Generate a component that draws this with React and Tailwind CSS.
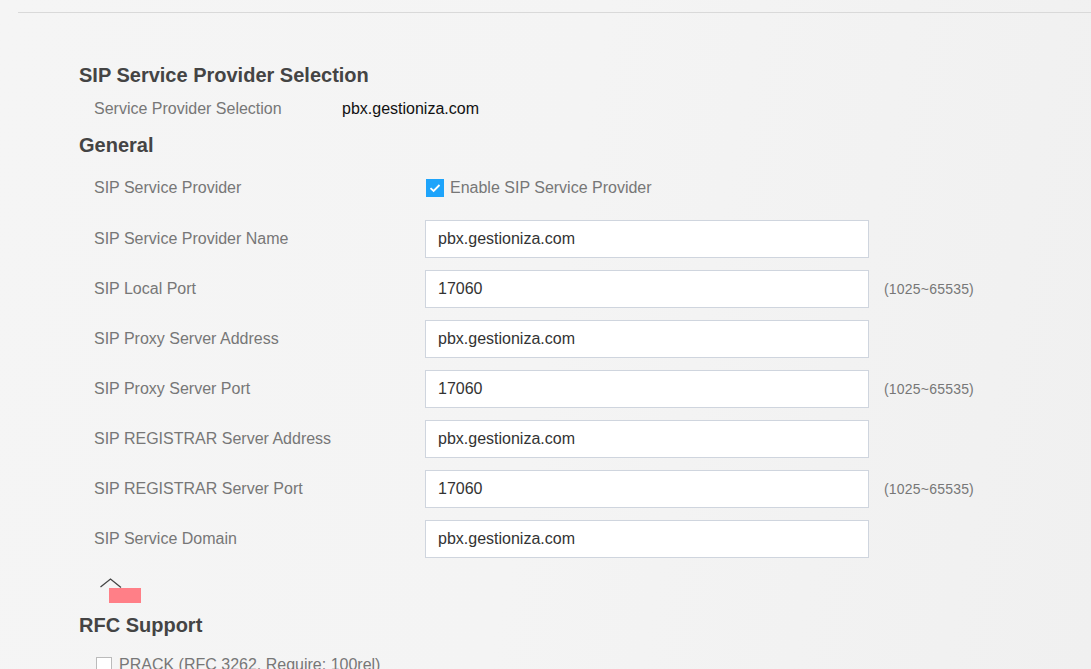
import React from "react";

const font = { fontFamily: '"Liberation Sans", Arial, sans-serif' };

function Heading({ children, className = "" }) {
  return (
    <h2 className={`h-[28px] leading-[28px] text-[20px] font-bold text-[#444] ${className}`}>
      {children}
    </h2>
  );
}

function InputRow({ label, value, range }) {
  return (
    <div className="flex items-center pl-[15px] h-[38px]">
      <div className="w-[331px] text-[16px] text-[#777]">{label}</div>
      <input
        readOnly
        value={value}
        className="w-[444px] h-[38px] border border-[#cfd5de] bg-white pl-[12px] text-[16px] text-[#333] outline-none"
        style={font}
      />
      {range && <span className="ml-[15px] text-[14px] tracking-[0.2px] text-[#777]">{range}</span>}
    </div>
  );
}

export default function App() {
  const rows = [
    ["SIP Service Provider Name", "pbx.gestioniza.com"],
    ["SIP Local Port", "17060", "(1025~65535)"],
    ["SIP Proxy Server Address", "pbx.gestioniza.com"],
    ["SIP Proxy Server Port", "17060", "(1025~65535)"],
    ["SIP REGISTRAR Server Address", "pbx.gestioniza.com"],
    ["SIP REGISTRAR Server Port", "17060", "(1025~65535)"],
    ["SIP Service Domain", "pbx.gestioniza.com"],
  ];

  return (
    <div
      className="w-full min-h-screen overflow-hidden bg-[linear-gradient(100deg,#f5f5f5_0%,#f4f4f4_50%,#f0f0f0_100%)] pt-[12px]"
      style={font}
    >
      <div className="ml-[18px] h-px bg-[#d9d9d9]" />

      <div className="pl-[79px]">
        <Heading className="mt-[48px]">SIP Service Provider Selection</Heading>

        <div className="mt-[8px] flex items-center h-[24px] pl-[15px] text-[16px]">
          <span className="w-[248px] text-[#777]">Service Provider Selection</span>
          <span className="text-[#111]">pbx.gestioniza.com</span>
        </div>

        <Heading className="mt-[10px]">General</Heading>

        <div className="mt-[17px] flex items-center h-[24px] pl-[15px] text-[16px]">
          <span className="w-[332px] text-[#777]">SIP Service Provider</span>
          <span className="w-[18px] h-[18px] bg-[#1ea4fb] flex items-center justify-center">
            <svg width="12" height="10" viewBox="0 0 12 10">
              <path d="M1.5 5.2 L4.6 8 L10.5 2" fill="none" stroke="#fff" strokeWidth="1.8" />
            </svg>
          </span>
          <span className="ml-[6px] text-[#777]">Enable SIP Service Provider</span>
        </div>

        <div className="mt-[20px] flex flex-col gap-[12px]">
          {rows.map(([l, v, r]) => (
            <InputRow key={l} label={l} value={v} range={r} />
          ))}
        </div>

        <div className="mt-[20px] pl-[21px]">
          <svg width="22" height="10" viewBox="0 0 22 10" className="block">
            <path d="M0.5 9 L10.5 1 L21 9.5" fill="none" stroke="#444" strokeWidth="1.3" />
          </svg>
          <div className="ml-[9px] w-[32px] h-[15px] bg-[#ff7f87]" />
        </div>

        <Heading className="mt-[8px]">RFC Support</Heading>

        <div className="mt-[16px] flex items-center h-[20px] pl-[17px] text-[16px]">
          <span className="w-[16px] h-[16px] border border-[#bbb] bg-white" />
          <span className="ml-[7px] text-[#777]">PRACK (RFC 3262, Require: 100rel)</span>
        </div>
      </div>
    </div>
  );
}
